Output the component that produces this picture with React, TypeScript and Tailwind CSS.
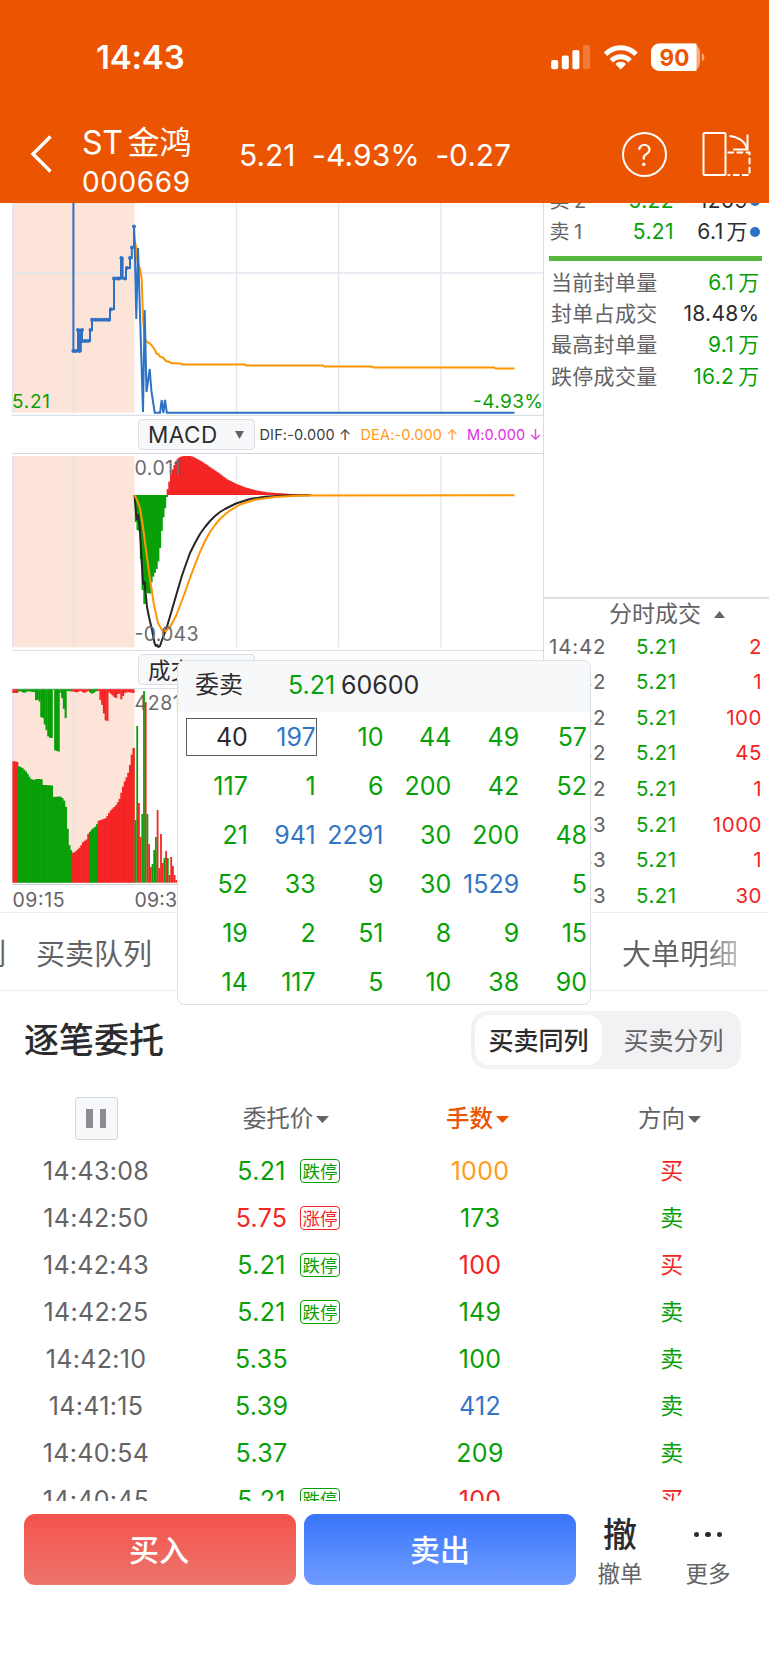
import React from "react";

type Point = [number, number];

const GREEN = "#08a008";
const RED = "#f42525";
const BLUE = "#2f72c4";
const ORANGE = "#ff9500";
const PEACH = "#fce5d8";
const GRID = "#e1e5ec";

const asks = [
  ["40", "197", "10", "44", "49", "57"],
  ["117", "1", "6", "200", "42", "52"],
  ["21", "941", "2291", "30", "200", "48"],
  ["52", "33", "9", "30", "1529", "5"],
  ["19", "2", "51", "8", "9", "15"],
  ["14", "117", "5", "10", "38", "90"]
];

const limitStats = [
  { label: "当前封单量", value: "6.1", unit: "万", color: "text-[#08a008]" },
  { label: "封单占成交", value: "18.48%", unit: "", color: "text-[#2c2c2e]" },
  { label: "最高封单量", value: "9.1", unit: "万", color: "text-[#08a008]" },
  { label: "跌停成交量", value: "16.2", unit: "万", color: "text-[#08a008]" }
];

const ticks = [
  ["14:42", "2"],
  ["14:42", "1"],
  ["14:42", "100"],
  ["14:42", "45"],
  ["14:42", "1"],
  ["14:43", "1000"],
  ["14:43", "1"],
  ["14:43", "30"]
];

const orders = [
  { time: "14:43:08", price: "5.21", tag: "跌停", lots: "1000", lotColor: "text-[#ff9d1e]", side: "买" },
  { time: "14:42:50", price: "5.75", tag: "涨停", lots: "173", lotColor: "text-[#08a008]", side: "卖" },
  { time: "14:42:43", price: "5.21", tag: "跌停", lots: "100", lotColor: "text-[#f42525]", side: "买" },
  { time: "14:42:25", price: "5.21", tag: "跌停", lots: "149", lotColor: "text-[#08a008]", side: "卖" },
  { time: "14:42:10", price: "5.35", tag: "", lots: "100", lotColor: "text-[#08a008]", side: "卖" },
  { time: "14:41:15", price: "5.39", tag: "", lots: "412", lotColor: "text-[#3475c6]", side: "卖" },
  { time: "14:40:54", price: "5.37", tag: "", lots: "209", lotColor: "text-[#08a008]", side: "卖" },
  { time: "14:40:45", price: "5.21", tag: "跌停", lots: "100", lotColor: "text-[#f42525]", side: "买" }
];

// linear interpolation over a sorted list of points
function valueAt(points: Point[], x: number) {
  for (let i = 1; i < points.length; i++) {
    const [x0, y0] = points[i - 1];
    const [x1, y1] = points[i];
    if (x <= x1) return y0 + ((y1 - y0) * (x - x0)) / (x1 - x0 || 1);
  }
  return points[points.length - 1][1];
}

const toLine = (points: Point[]) => points.map((p) => p.join(",")).join(" ");

const priceLine: Point[] = [
  [73.4, 200], [73.4, 351], [78, 351], [78, 330], [79.4, 330], [79.4, 351], [80.8, 351], [80.8, 330], [82, 330],
  [82, 341], [90, 341], [90, 330], [92, 330], [92, 319.8], [110, 319.8], [110, 309.3], [114, 309.3],
  [114, 278.6], [121, 278.6], [121, 258], [122.6, 258], [122.6, 278.6], [126, 278.6], [126, 268], [130, 268],
  [130, 258], [131.8, 258], [131.8, 247.5], [134, 247.5], [134, 226.6], [134.6, 240], [136.3, 319], [138, 248],
  [143, 412], [144.7, 310], [146.5, 392], [149.7, 369], [151.4, 391], [154.7, 412.7], [160, 412.7],
  [161.7, 400], [163.3, 413], [165, 400], [166.8, 412.7], [514.5, 412.7]
];

// one marker per auction match
const priceDots: Point[] = [
  [73.4, 351], [76, 351], [79.5, 351], [78, 330], [82, 330], [82, 341], [85, 341], [88, 341], [90.5, 330],
  [92, 319.8], [95, 319.8], [98, 319.8], [101, 319.8], [104, 319.8], [107, 319.8], [109, 319.8], [111, 309.3],
  [114, 278.6], [117, 278.6], [119, 278.6], [121.4, 258], [125, 278.6], [127, 268], [130, 258], [132, 247.5],
  [134, 226.6]
];

const averageLine: Point[] = [
  [134, 238], [136, 247], [137.5, 262], [140, 269], [141.7, 278], [143, 318], [144.6, 338], [147, 342],
  [150, 343.6], [153, 347], [155, 350], [156.5, 353.6], [158, 354], [160, 356.6], [163, 357.6], [166, 361],
  [169, 361.8], [172, 363.3], [181, 363.4], [182, 364.4], [245, 364.4], [246, 365.4], [323, 365.4],
  [324, 366.4], [372, 366.4], [373.5, 367.6], [494, 367.6], [496, 368.6], [514.5, 368.6]
];

const difLine: Point[] = [
  [134.5, 495], [136, 513], [136.8, 519], [138.2, 515], [139.6, 525], [140.2, 536], [143, 584], [144.6, 582],
  [147, 607], [149, 617], [152, 630], [154.5, 643], [156, 646], [157.2, 645], [158.5, 647], [160, 646],
  [162, 640], [166, 630], [171, 613], [178, 589], [182, 575.5], [186, 564], [190, 553], [195, 543], [200, 534],
  [205, 527], [210, 521], [215, 516], [220, 512], [225, 509], [236, 503.5], [250, 499], [265, 496.8],
  [285, 495.6], [310, 495.2]
];

const deaLine: Point[] = [
  [134.5, 495], [137, 500], [140, 508], [143, 527], [146, 550], [150, 579], [154, 605], [158, 623], [162, 630],
  [165.5, 631.4], [170, 627], [176, 616], [184, 595], [192, 572.5], [196, 562], [200, 552], [205, 541],
  [210, 532], [215, 525], [220, 519], [225, 514.5], [230, 510.5], [240, 504.5], [255, 499.8], [275, 497],
  [300, 495.6], [514.5, 495.3]
];

const macdDown: Point[] = [
  [134, 508], [136.5, 530], [138, 530], [138.2, 520], [140, 545], [142, 585], [143.5, 604], [145, 604], [145.2, 590],
  [149, 595], [150.5, 584], [152, 578], [156, 569], [158, 560], [160, 543], [162, 521], [164, 512], [166, 497]
];

const macdUp: Point[] = [
  [167, 491], [169, 482], [171, 474], [173, 468], [175, 463], [178, 458], [181, 456.6], [184, 456], [190, 456],
  [195, 458], [202, 462], [210, 467.5], [219, 473.5], [226, 479], [236, 484], [245, 487.5], [256, 490.5],
  [268, 492.5], [290, 494], [312, 494.7]
];

const auctionVolume: Point[] = [
  [12, 761], [17, 762], [18, 766], [22, 768], [25, 771], [28, 775], [30, 779], [34, 780], [36, 779], [41, 779],
  [42, 785], [45, 785], [52, 785.5], [53, 797], [60, 796.5], [63, 799], [65, 804], [66, 811], [68, 842], [70, 849],
  [72, 853], [75, 852], [78, 849], [80, 847], [83, 842], [87, 839], [88, 834], [92, 829], [96, 826], [98, 821],
  [106, 818], [110, 811], [116, 805], [119, 800], [121, 793], [123, 786], [125, 780], [127, 776], [129, 770],
  [131, 757], [133, 748]
];

const unmatched: Point[] = [
  [12, 693], [17, 693], [18, 692], [20, 691], [24, 693], [28, 691], [32, 692], [35, 692], [36, 702], [38, 699],
  [39.5, 702], [40.5, 717], [43, 718], [44, 723], [46, 729], [47.5, 736], [50, 738], [52.4, 738], [52.6, 690],
  [53.8, 690], [54, 750], [59.5, 752], [60.2, 691], [61.5, 696], [63, 704], [64.5, 715], [66.5, 722], [67, 691],
  [73, 691.5], [77, 692.5], [80, 690.5], [84, 693], [88, 691], [92, 694], [96, 691], [98.5, 691], [99.5, 695],
  [100.5, 702], [102, 705], [103.5, 711], [104.2, 720], [107.5, 721], [108, 691.5], [112, 695], [114, 697],
  [115.5, 699], [117, 695], [119, 692], [120.5, 700], [122, 698], [124, 693], [128, 692], [133, 693]
];

const sessionVolume: [number, number, string][] = [
  [134.6, 820, GREEN], [136.3, 726, GREEN], [138, 803, RED], [139.7, 837, RED], [141.4, 814, GREEN],
  [143.1, 691, GREEN], [144.8, 702, RED], [146.5, 814, GREEN], [148.2, 844, RED], [149.9, 867, RED],
  [151.6, 864, GREEN], [153.3, 850, GREEN], [155, 837, GREEN], [156.7, 810, RED], [158.4, 868, RED],
  [160.1, 834, RED], [161.8, 863, RED], [163.5, 858, GREEN], [165.2, 851, RED], [166.9, 858, GREEN],
  [168.6, 875, RED], [170.3, 857, RED], [172, 866, RED], [173.7, 875, RED], [175.4, 880, RED], [177.1, 878, RED]
];

function auctionColor(x: number) {
  if (x < 17.4) return RED;
  if (x < 70) return GREEN;
  if (x > 88.5 && x < 96) return GREEN;
  return RED;
}

function range(from: number, to: number, step: number) {
  const out: number[] = [];
  for (let x = from; x < to; x += step) out.push(x);
  return out;
}

const GridLines = ({ top, bottom }: { top: number; bottom: number }) => (
  <g stroke={GRID} strokeWidth="1.3">
    {[73.2, 236.5, 338.7, 441].map((x) => (
      <line key={x} x1={x} x2={x} y1={top} y2={bottom} />
    ))}
    <line x1="12.6" x2="12.6" y1={top} y2={bottom} />
  </g>
);

const PriceChart = () => (
  <svg className="block" width="543" height="213" viewBox="0 203 543 213">
    <rect x="12" y="203" width="122.5" height="209.7" fill={PEACH} />
    <GridLines top={203} bottom={412.7} />
    <line x1="12" x2="543" y1="273" y2="273" stroke={GRID} strokeWidth="1.5" />
    <line x1="12" x2="543" y1="415.3" y2="415.3" stroke="#dcdfe5" strokeWidth="1.2" />
    <polyline points={toLine(averageLine)} fill="none" stroke={ORANGE} strokeWidth="2" />
    <polyline points={toLine(priceLine)} fill="none" stroke={BLUE} strokeWidth="2" />
    {priceDots.map(([x, y], i) => (
      <circle key={i} cx={x} cy={y} r="2" fill={BLUE} />
    ))}
    <text x="12" y="408.3" fontSize="19" fill={GREEN} textLength="38">5.21</text>
    <text x="543" y="408.3" fontSize="19" fill={GREEN} textAnchor="end" textLength="70">-4.93%</text>
  </svg>
);

const MacdChart = () => (
  <svg className="block" width="543" height="198" viewBox="0 453 543 198">
    <rect x="12" y="456" width="122.5" height="191.3" fill={PEACH} />
    <GridLines top={456} bottom={647.3} />
    <line x1="12" x2="543" y1="453.5" y2="453.5" stroke="#d3d7de" strokeWidth="1" />
    <line x1="12" x2="543" y1="650.5" y2="650.5" stroke="#dcdfe5" strokeWidth="1" />
    {range(134.8, 166.4, 1.7).map((x) => (
      <rect key={x} x={x} y="495" width="2.5" height={valueAt(macdDown, x + 0.8) - 495} fill={GREEN} />
    ))}
    {range(166.6, 310, 1.7).map((x) => {
      const top = valueAt(macdUp, x + 0.8);
      return <rect key={x} x={x} y={top} width="2.5" height={495 - top} fill={RED} />;
    })}
    <polyline points={toLine(difLine)} fill="none" stroke="#262626" strokeWidth="2" strokeLinejoin="round" />
    <polyline points={toLine(deaLine)} fill="none" stroke={ORANGE} strokeWidth="2" strokeLinejoin="round" />
    <text x="134.5" y="475" fontSize="19.5" fill="#6a6a6c" textLength="47">0.011</text>
    <text x="134.5" y="641" fontSize="19.5" fill="#6a6a6c" textLength="64">-0.043</text>
  </svg>
);

const VolumeChart = () => (
  <svg className="block" width="543" height="224" viewBox="0 688 543 224">
    <line x1="12" x2="543" y1="688.5" y2="688.5" stroke="#dcdfe5" strokeWidth="1" />
    <rect x="12" y="689.5" width="122.5" height="193.2" fill={PEACH} />
    <GridLines top={689} bottom={882.7} />
    {range(12.4, 132.6, 1.74).map((x) => {
      const top = valueAt(auctionVolume, x + 0.8);
      return (
        <g key={x} fill={auctionColor(x)}>
          <rect x={x} y={top} width="2.4" height={882.7 - top} />
          <rect x={x} y="689.2" width="2.1" height={valueAt(unmatched, x + 0.8) - 689.2} />
        </g>
      );
    })}
    <text x="134.5" y="710" fontSize="19.5" fill="#6a6a6c" letterSpacing="0.6">42810</text>
    {sessionVolume.map(([x, top, fill]) => (
      <rect key={x} x={x} y={top} width="1.8" height={882.7 - top} fill={fill} />
    ))}
    <line x1="12" x2="543" y1="884.5" y2="884.5" stroke="#d0d4db" strokeWidth="1.2" />
    <text x="12.5" y="906.6" fontSize="19.5" fill="#636366" textLength="52">09:15</text>
    <text x="134.5" y="906.6" fontSize="19.5" fill="#636366" textLength="55">09:30</text>
  </svg>
);

const Caret = ({ className }: { className: string }) => (
  <svg className={className} viewBox="0 0 12 7" preserveAspectRatio="none">
    <path d="M0 0h12L6 7z" fill="currentColor" />
  </svg>
);

const StatusBar = () => (
  <div className="flex h-[114px] pl-[96px]">
    <span className="w-[454px] pt-[37px] text-[33px] leading-[41px] font-semibold tracking-[-0.2px]">14:43</span>
    <svg className="block" width="160" height="114" viewBox="550 0 160 114">
      <g fill="#fff">
        <rect x="551.2" y="60" width="7" height="9.3" rx="2" />
        <rect x="561.8" y="55.5" width="7" height="13.8" rx="2" />
        <rect x="572.4" y="50" width="7" height="19.3" rx="2" />
        <rect x="583" y="45" width="7" height="24.3" rx="2" opacity="0.22" />
      </g>
      <g fill="none" stroke="#fff" strokeWidth="5">
        <path d="M605.5 54.2a21.5 21.5 0 0 1 30.5 0" />
        <path d="M611.5 60.7a13 13 0 0 1 18.5 0" />
      </g>
      <path d="M620.7 69.4l-5.4-5.4a7.4 7.4 0 0 1 10.8 0z" fill="#fff" />
      <rect x="651" y="43.5" width="49" height="27.5" rx="8.5" fill="#fff" opacity="0.5" />
      <path d="M659.5 43.5H696.5V71H659.5a8.5 8.5 0 0 1-8.5-8.5V52a8.5 8.5 0 0 1 8.5-8.5z" fill="#fff" />
      <path d="M701.8 53.2c3.4 1.2 3.4 7 0 8.3z" fill="#fff" opacity="0.5" />
      <text x="674.5" y="65.7" fontSize="22.5" fontWeight="700" fill="#eb5502" textAnchor="middle">90</text>
    </svg>
  </div>
);

const NavBar = () => (
  <div className="flex h-[89px] items-start">
    <svg className="ml-[29px] mt-[20px] block" width="26" height="40" viewBox="0 0 26 40">
      <path d="M21.5 2.5L4 20l17.5 17.5" fill="none" stroke="#fff" strokeWidth="3.4" />
    </svg>
    <div className="ml-[27px] w-[157px] pt-[8px] whitespace-nowrap">
      <div className="flex h-[40px] items-center pt-[2px] text-[32px] leading-none">
        <span className="tracking-[-0.3px]">ST</span>
        <span className="ml-[5px]">金鸿</span>
      </div>
      <div className="flex h-[40px] items-center text-[28px] leading-none tracking-[0.6px]">000669</div>
    </div>
    <div className="flex w-[383px] gap-[16.5px] pt-[21px] text-[30px] leading-[40px] whitespace-nowrap">
      <span>5.21</span>
      <span className="tracking-[0.1px]">-4.93%</span>
      <span className="-ml-px tracking-[-0.1px]">-0.27</span>
    </div>
    <div className="mt-[18px] flex size-[45px] shrink-0 items-center justify-center rounded-full border-2 border-white text-[30px] leading-none font-light">
      ?
    </div>
    <svg className="ml-[35px] mt-[17px] block" width="50" height="46" viewBox="703 131 50 46">
      <g fill="none" stroke="#fff" strokeWidth="2">
        <rect x="704.5" y="133" width="22" height="42" rx="1" />
        <path d="M730.5 136c9 1 16.5 6 17 12.5" />
        <path d="M748.5 134.5V149.5H734" />
        <path d="M728.5 152.5h22v22.5h-22" strokeDasharray="6.5 2.6" />
      </g>
    </svg>
  </div>
);

const IndicatorPicker = ({ children }: { children: React.ReactNode }) => (
  <div className="flex h-[31px] w-[117px] items-center justify-between rounded border border-[#dcdfe5] bg-[#f7f8fa] pr-[10px] pl-[9px] text-[22.5px] leading-none text-[#2c2c2e]">
    {children}
    <Caret className="h-[8px] w-[9px] text-[#636366]" />
  </div>
);

const ChartColumn = () => (
  <div className="w-[543px]">
    <PriceChart />
    <div className="flex h-[37px] items-start pt-[3px] pl-[138px]">
      <IndicatorPicker><span className="pt-px tracking-[0.5px]">MACD</span></IndicatorPicker>
      <div className="flex h-[31px] items-center pl-[4.5px] text-[14.5px] whitespace-nowrap tracking-[0.15px]">
        <span className="w-[101px] text-[#3b3b3d]">DIF:-0.000 ↑</span>
        <span className="w-[106.5px] text-[#ff9a1a]">DEA:-0.000 ↑</span>
        <span className="text-[#e32be3]">M:0.000 ↓</span>
      </div>
    </div>
    <MacdChart />
    <div className="flex h-[37px] items-start pt-[3px] pl-[138px]">
      <IndicatorPicker><span className="pt-[3px]">成交量</span></IndicatorPicker>
    </div>
    <VolumeChart />
  </div>
);

const AskRow = ({ label, price, volume, unit }: { label: string; price: string; volume: string; unit?: string }) => (
  <div className="flex h-[31px] shrink-0 items-center pl-[5.5px] text-[21px] leading-none tracking-[0.4px]">
    <span className="w-[65px] text-[20px] text-[#636366]">卖<span className="ml-[4px]">{label}</span></span>
    <span className="w-[59.5px] text-right text-[#08a008]">{price}</span>
    <span className="w-[74px] text-right text-[#2c2c2e]">{volume}{unit && <span className="ml-[3px]">{unit}</span>}</span>
    <span className="ml-[2px] size-[10px] rounded-full bg-[#2f72c4]" />
  </div>
);

const QuoteColumn = () => (
  <div className="flex w-[226px] flex-col border-l border-[#d8dce2]">
    <div className="flex h-[44px] shrink-0 flex-col justify-end overflow-hidden">
      <AskRow label="2" price="5.22" volume="1209" />
      <AskRow label="1" price="5.21" volume="6.1" unit="万" />
    </div>
    <div className="mt-[9px] ml-[5px] h-[5px] w-[213px] shrink-0 bg-[#56b83f]" />
    <div className="mt-[6px] h-[329px] shrink-0">
      {limitStats.map((s) => (
        <div key={s.label} className="flex h-[31.2px] items-center justify-between pr-[9.5px] pl-[7px] text-[21px] leading-none tracking-[0.3px]">
          <span className="text-[#636366]">{s.label}</span>
          <span className={s.color}>{s.value}{s.unit && <span className="ml-[4px]">{s.unit}</span>}</span>
        </div>
      ))}
    </div>
    <div className="mt-px flex h-[32px] shrink-0 items-center border-t-2 border-[#dcdfe5] pl-[65px] text-[23px] leading-none text-[#636366]">
      分时成交
      <Caret className="ml-[13px] h-[7px] w-[11px] rotate-180" />
    </div>
    <div>
      {ticks.map(([time, vol], i) => (
        <div key={i} className="flex h-[35.65px] items-center pl-[5px] text-[20.5px] leading-none tracking-[0.5px]">
          <span className="w-[87px] tracking-[0.8px] text-[#636366]">{time}</span>
          <span className="w-[50px] text-[#08a008]">5.21</span>
          <span className="w-[76px] text-right text-[#f42525]">{vol}</span>
        </div>
      ))}
    </div>
  </div>
);

function askColor(row: number, col: number, value: string) {
  if (row === 0 && col === 0) return "text-[#2c2c2e]";
  return value.length > 3 || value === "197" || value === "941" ? "text-[#3475c6]" : "text-[#08a008]";
}

const QueuePopup = () => (
  <div className="absolute top-[457px] left-[177px] h-[345px] w-[414px] overflow-hidden rounded-lg border border-[#dcdfe6] bg-white text-[25px] leading-none">
    <div className="flex h-[51px] items-center bg-[#f7f8fa] pb-[3px] pl-[17px] text-[#2c2c2e]">
      <span className="w-[93px] text-[24px]">委卖</span>
      <span className="w-[53px] text-[#08a008]">5.21</span>
      <span>60600</span>
    </div>
    <div className="relative w-[409px] pt-[1.5px]">
      <div className="absolute top-[6px] left-[8px] h-[38px] w-[131px] border-[1.5px] border-[#5c5c5e]" />
      {asks.map((row, r) => (
        <div key={r} className="grid h-[48.9px] grid-cols-6 items-center pl-[2px] text-right">
          {row.map((v, c) => (
            <span key={c} className={askColor(r, c, v)}>{v}</span>
          ))}
        </div>
      ))}
    </div>
  </div>
);

const TabStrip = () => (
  <div className="flex h-[79px] items-center overflow-hidden border-y border-[#ececee] pt-[5px] text-[29px] leading-none whitespace-nowrap text-[#636366]">
    <span className="-ml-[23px] w-[59px]">列</span>
    <span className="w-[586px]">买卖队列</span>
    <span className="bg-gradient-to-r from-[#636366] from-70% to-[#c4c4c6] bg-clip-text text-transparent">大单明细</span>
  </div>
);

const OrderList = () => (
  <div>
    <div className="flex h-[98px] items-center justify-between pr-[28px] pl-[24px]">
      <h2 className="pt-px text-[35px] leading-none font-medium text-[#2c2c2e]">逐笔委托</h2>
      <div className="flex h-[58px] w-[270px] rounded-[16px] bg-[#f2f2f5] p-1 text-[25px] leading-none">
        <div className="flex w-[127px] items-center justify-center rounded-[14px] bg-white pt-[2px] font-medium text-[#2c2c2e]">
          买卖同列
        </div>
        <div className="flex flex-1 items-center justify-center pt-[2px] pl-[8px] text-[#636366]">买卖分列</div>
      </div>
    </div>
    <div className="grid h-[59px] w-[768px] grid-cols-4 items-center text-[23.5px] leading-none text-[#636366]">
      <div className="flex justify-center">
        <div className="flex h-[43px] w-[43px] items-center justify-center gap-[7px] rounded-[3px] border border-[#d3d7de] bg-[#f7f8fa]">
          <span className="h-[19px] w-[6.5px] bg-[#8c8c94]" />
          <span className="h-[19px] w-[6.5px] bg-[#8c8c94]" />
        </div>
      </div>
      <div className="flex items-center justify-center gap-[3px] pt-px pr-[4px]">委托价<Caret className="h-[7px] w-[13px]" /></div>
      <div className="flex items-center justify-center gap-[3px] pt-px pr-[5px] font-medium text-[#eb5502]">手数<Caret className="h-[7px] w-[13px]" /></div>
      <div className="flex items-center justify-center gap-[3px] pt-px pr-[5px]">方向<Caret className="h-[7px] w-[13px]" /></div>
    </div>
    <div className="h-[353px] w-[768px] overflow-hidden">
      {orders.map((o) => {
        const up = o.tag === "涨停";
        return (
          <div key={o.time} className="grid h-[46.95px] grid-cols-4 items-center pt-px text-center text-[25px] leading-none tracking-[0.3px]">
            <span className="text-[#636366]">{o.time}</span>
            <div className={`flex items-center justify-center gap-[12px] ${up ? "text-[#f42525]" : "text-[#08a008]"}`}>
              <span className="w-[53px]">{o.price}</span>
              <span
                className={`mr-px mb-[2px] flex h-[24px] w-[40px] items-center justify-center rounded border pt-px text-[17.5px] tracking-normal ${
                  o.tag ? "border-current" : "border-transparent"
                }`}
              >
                {o.tag}
              </span>
            </div>
            <span className={o.lotColor}>{o.lots}</span>
            <span className={`text-[23px] ${o.side === "买" ? "text-[#f42525]" : "text-[#08a008]"}`}>{o.side}</span>
          </div>
        );
      })}
    </div>
  </div>
);

const TradeBar = () => (
  <div className="flex h-[164px] items-start gap-2 pt-[13px] pl-[24px] leading-none">
    <button className="h-[71px] w-[272px] rounded-[11px] bg-gradient-to-b from-[#f3524a] to-[#ec746d] pr-[2px] text-[30px] font-medium text-white">
      买入
    </button>
    <button className="h-[71px] w-[272px] rounded-[11px] bg-gradient-to-b from-[#3975fb] to-[#6e9bff] text-[30px] font-medium text-white">
      卖出
    </button>
    <div className="flex w-[72px] flex-col items-center">
      <span className="flex h-[41px] items-center pt-px text-[34px] font-medium text-[#2c2c2e]">撤</span>
      <span className="mt-[8px] text-[22.5px] text-[#636366]">撤单</span>
    </div>
    <div className="flex w-[88px] flex-col items-center">
      <div className="flex h-[41px] items-center gap-[6px]">
        <span className="size-[5.5px] rounded-full bg-[#2c2c2e]" />
        <span className="size-[5.5px] rounded-full bg-[#2c2c2e]" />
        <span className="size-[5.5px] rounded-full bg-[#2c2c2e]" />
      </div>
      <span className="mt-[8px] text-[22.5px] text-[#636366]">更多</span>
    </div>
  </div>
);

export default function App() {
  return (
    <div className="h-[1665px] w-[769px] overflow-hidden bg-white font-['Inter','Noto_Sans_CJK_SC',sans-serif]">
      <header className="h-[203px] bg-[#eb5502] text-white">
        <StatusBar />
        <NavBar />
      </header>
      <section className="relative flex h-[709px]">
        <ChartColumn />
        <QuoteColumn />
        <QueuePopup />
      </section>
      <TabStrip />
      <OrderList />
      <TradeBar />
    </div>
  );
}
